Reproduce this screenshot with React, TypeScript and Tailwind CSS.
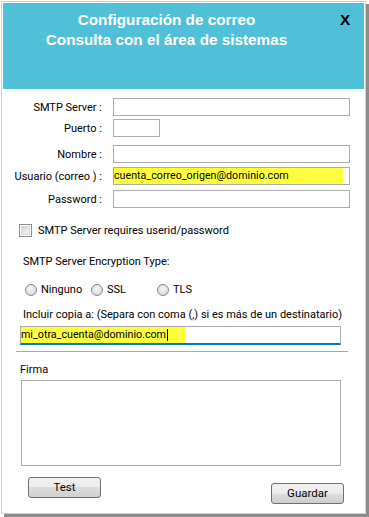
import React from "react";

const font = { fontFamily: "Roboto, 'Liberation Sans', sans-serif" };

function Row({
  label,
  mt,
  w,
  children,
}: {
  label: string;
  mt: string;
  w: string;
  children?: React.ReactNode;
}) {
  return (
    <div className={`flex items-center h-[18px] ${mt}`}>
      <div className="w-[99px] text-right text-[11px] leading-[13px] text-black">{label}</div>
      <div className={`ml-[11px] h-[18px] ${w} border border-[#acacac] bg-white flex items-stretch p-[0px]`}>
        {children}
      </div>
    </div>
  );
}

function Radio({ label, w }: { label: string; w: string }) {
  return (
    <div className={`flex items-center ${w}`}>
      <div className="w-[12px] h-[12px] rounded-full border border-[#8a8a8a] bg-[radial-gradient(circle_at_45%_40%,#f4f4f4_0%,#e2e2e2_55%,#c4c4c4_100%)]" />
      <span className="ml-[4px] text-[11px] leading-[13px] text-black">{label}</span>
    </div>
  );
}

function Button({ label, mt }: { label: string; mt: string }) {
  return (
    <div
      className={`w-[73px] h-[21px] ${mt} rounded-[3px] border border-[#707070] bg-[linear-gradient(#f2f2f2_0%,#ebebeb_50%,#dddddd_50%,#cfcfcf_100%)] flex items-center justify-center text-[11.5px] text-black`}
    >
      {label}
    </div>
  );
}

export default function App() {
  return (
    <div className="w-[369px] h-[517px] bg-white pt-[1px] pl-[1px]" style={font}>
      <div className="w-[365px] h-[513px] border border-[#d2d2d2] p-[1px] bg-white shadow-[3px_3px_0_0_#8c8c8c] flex flex-col">
        <div className="relative h-[86px] bg-[#50bfd8]">
          <div
            className="pt-[6.5px] pr-[34px] text-center text-white font-bold text-[15.3px] leading-[20px]"
            style={{ fontFamily: "'Liberation Sans', Arial, sans-serif" }}
          >
            <div>Configuración de correo</div>
            <div>Consulta con el área de sistemas</div>
          </div>
          <div
            className="absolute left-[337px] top-[6.5px] text-black font-bold text-[15.3px] leading-[20px]"
            style={{ fontFamily: "'Liberation Sans', Arial, sans-serif" }}
          >
            X
          </div>
        </div>

        <div className="flex flex-col">
          <Row label="SMTP Server :" mt="mt-[9px]" w="w-[237px]" />
          <Row label="Puerto :" mt="mt-[3px]" w="w-[47px]" />
          <Row label="Nombre :" mt="mt-[8px]" w="w-[237px]" />
          <Row label="Usuario (correo ) :" mt="mt-[4px]" w="w-[237px]">
            <div className="w-[229px] bg-[#ffff3a] text-[10.7px] leading-[16px] text-black">
              cuenta_correo_origen@dominio.com
            </div>
          </Row>
          <Row label="Password :" mt="mt-[5px]" w="w-[237px]" />

          <div className="flex items-center mt-[16px] ml-[16px] h-[13px]">
            <div className="w-[13px] h-[13px] border border-[#8e8e8e] bg-white p-[1px]">
              <div className="w-full h-full border border-[#d8d8d8] bg-[linear-gradient(135deg,#d6d6d6,#f6f6f6)]" />
            </div>
            <span className="ml-[6px] text-[11px] leading-[13px] text-black">
              SMTP Server requires userid/password
            </span>
          </div>

          <div className="mt-[18px] ml-[20px] text-[11px] leading-[13px] text-black">
            SMTP Server Encryption Type:
          </div>

          <div className="flex items-center mt-[15px] ml-[22px] h-[13px]">
            <Radio label="Ninguno" w="w-[66px]" />
            <Radio label="SSL" w="w-[66px]" />
            <Radio label="TLS" w="w-[66px]" />
          </div>

          <div className="mt-[12px] ml-[20px] text-[11px] leading-[13px] text-black">
            Incluir copia a: (Separa con coma (,) si es más de un destinatario)
          </div>

          <div className="mt-[5px] ml-[17px] w-[321px] h-[19px] border border-[#acacac] border-b-2 border-b-[#0078d7] bg-white flex items-stretch">
            <div className="w-[164px] bg-[#ffff3a] flex items-center text-[10.7px] leading-[14px] text-black">
              <span>mi_otra_cuenta@dominio.com</span>
              <span className="ml-[1px] w-[1px] h-[12px] bg-black" />
            </div>
          </div>

          <div className="mt-[6px] ml-[13px] w-[332px] h-[1px] bg-[#a8a8a8]" />

          <div className="mt-[10.5px] ml-[17px] text-[11px] leading-[13px] text-black">Firma</div>

          <div className="mt-[4.5px] ml-[18px] w-[320px] h-[86px] border border-[#acacac] bg-white" />

          <div className="flex items-start justify-between ml-[25px] mr-[20px]">
            <Button label="Test" mt="mt-[11px]" />
            <Button label="Guardar" mt="mt-[17px]" />
          </div>
        </div>
      </div>
    </div>
  );
}
